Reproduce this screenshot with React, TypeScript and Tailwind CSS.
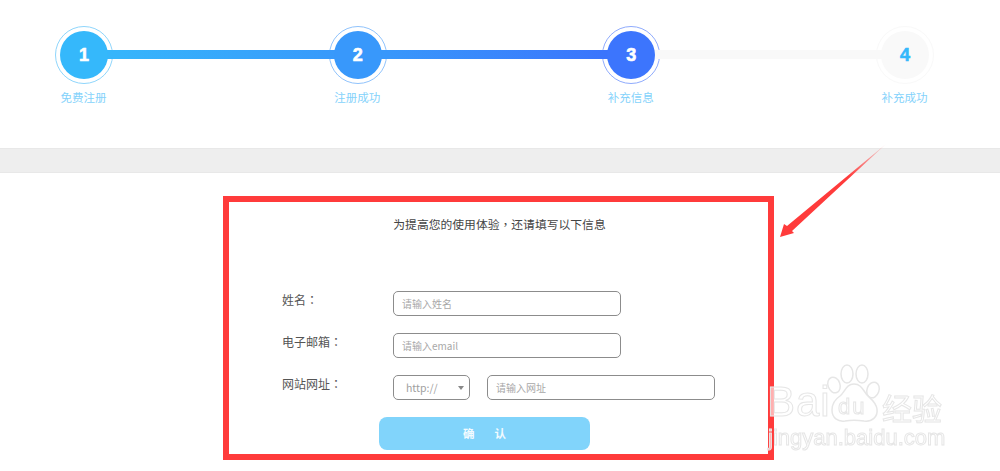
const cjk = "font-['Noto_Sans_CJK_SC','Noto_Sans',sans-serif]";
const punct = "font-['Noto_Sans_CJK_TC',sans-serif]";

function Step({ num, label, ring, fill, digit }: { num: string; label: string; ring: string; fill: string; digit: string }) {
  return (
    <div className="flex flex-col items-center w-[58px] shrink-0">
      <div className={`w-[58px] h-[58px] rounded-full border flex items-center justify-center ${ring}`}>
        <div className={`relative z-10 w-[48px] h-[48px] rounded-full flex items-center justify-center pt-[1px] text-[18px] font-bold font-['Liberation_Sans',sans-serif] [-webkit-text-stroke:0.6px_currentColor] ${fill} ${digit}`}>
          {num}
        </div>
      </div>
      <div className="mt-[5px] -ml-[1px] text-[11.5px] leading-[16px] whitespace-nowrap text-[#84d2fb]">{label}</div>
    </div>
  );
}

function Bar({ color }: { color: string }) {
  return <div className={`relative z-[5] flex-1 h-[9px] mt-[24px] -mx-[6px] ${color}`} />;
}

function Field({ placeholder, width }: { placeholder: string; width: string }) {
  return (
    <input
      placeholder={placeholder}
      className={`${width} h-[25px] px-[8px] border border-[#8c8c8c] rounded-[5px] bg-white text-[10px] outline-none placeholder:text-[#a8a8a8]`}
    />
  );
}

function Row({ label, children }: { label: string; children: React.ReactNode }) {
  return (
    <div className="flex pl-[53px]">
      <div className="w-[111px] pt-[1px] text-[12px] leading-[16px] text-[#555]">
        {label}
        <span className={punct}>：</span>
      </div>
      {children}
    </div>
  );
}

function Watermark() {
  const outline = "[-webkit-text-stroke:1px_#e6e6e6] text-white/60";
  return (
    <div className="absolute left-[767px] top-[362px] w-[185px] h-[90px] pointer-events-none blur-[0.4px]">
      <span className={`absolute left-0 top-[16px] text-[42px] leading-[48px] tracking-[1px] font-['Liberation_Sans',sans-serif] ${outline}`}>Bai</span>
      <svg className="absolute left-[58px] top-0" width="60" height="64" viewBox="825 362 60 64" fill="none" stroke="#e6e6e6" strokeWidth="1.5">
        <ellipse cx="834" cy="385" rx="6" ry="8" fill="#fff" fillOpacity="0.6" transform="rotate(-20 834 385)" />
        <ellipse cx="847" cy="374" rx="6" ry="9" fill="#fff" fillOpacity="0.6" />
        <ellipse cx="862" cy="374" rx="6" ry="9" fill="#fff" fillOpacity="0.6" />
        <ellipse cx="873" cy="390" rx="6" ry="8" fill="#fff" fillOpacity="0.6" transform="rotate(20 873 390)" />
        <path d="M854 384 C846 384 845 392 840 396 C834 400 832 405 832 410 C832 418 838 422 845 421 C850 420 858 420 864 421 C872 422 878 417 877 409 C876 402 871 399 867 395 C863 390 861 384 854 384 Z" fill="#fff" fillOpacity="0.6" />
      </svg>
      <span className={`absolute left-[71px] top-[32px] text-[22px] leading-[26px] tracking-[2px] font-['Liberation_Sans',sans-serif] ${outline}`}>du</span>
      <span className={`absolute left-[115px] top-[28px] text-[30px] leading-[34px] whitespace-nowrap ${cjk} ${outline}`}>经验</span>
      <span className={`absolute left-[1px] top-[63px] text-[22px] leading-[26px] whitespace-nowrap font-['Liberation_Sans',sans-serif] ${outline}`}>jingyan.baidu.com</span>
    </div>
  );
}

export default function App() {
  return (
    <div className={`relative w-[1000px] h-[471px] overflow-hidden bg-white ${cjk}`}>
      {/* Steps */}
      <div className="flex h-[148px] pt-[26px] pl-[55px] pr-[66px]">
        <Step num="1" label="免费注册" ring="border-[#8fd6fc]" fill="bg-[#35b8fb]" digit="text-white" />
        <Bar color="bg-gradient-to-r from-[#36b6fb] to-[#3899fb]" />
        <Step num="2" label="注册成功" ring="border-[#90c3fc]" fill="bg-[#3898fb]" digit="text-white" />
        <Bar color="bg-gradient-to-r from-[#3898fb] to-[#3b74fc]" />
        <Step num="3" label="补充信息" ring="border-[#8fabfd]" fill="bg-[#3c75fd]" digit="text-white" />
        <Bar color="bg-[#f9f9f9]" />
        <Step num="4" label="补充成功" ring="border-[#f9f9f9]" fill="bg-[#f9f9f9]" digit="text-[#35b8fb]" />
      </div>

      {/* Gray band */}
      <div className="h-[25px] bg-[#eeeeee] border-y border-[#e8e8e8]" />

      {/* Form */}
      <div className="mt-[23px] ml-[223px] w-[551px] h-[264px] border-[6px] border-[#ff3b3b]">
        <div className="pt-[13px] pl-[2px] text-center text-[11.8px] leading-[18px] text-[#444]">
          为提高您的使用体验<span className={punct}>，</span>还请填写以下信息
        </div>
        <div className="mt-[58px] flex flex-col gap-[17px]">
          <Row label="姓名">
            <Field placeholder="请输入姓名" width="w-[228px]" />
          </Row>
          <Row label="电子邮箱">
            <Field placeholder="请输入email" width="w-[228px]" />
          </Row>
          <Row label="网站网址">
            <div className="flex gap-[17px]">
              <div className="relative flex items-center w-[77px] h-[25px] pl-[12px] border border-[#8c8c8c] rounded-[5px] bg-white text-[10.5px] text-[#a0a0a0]">
                http://
                <div className="absolute right-[5px] top-[10px] w-0 h-0 border-x-[3px] border-x-transparent border-t-[4px] border-t-[#888]" />
              </div>
              <Field placeholder="请输入网址" width="w-[228px]" />
            </div>
          </Row>
        </div>
        <div className="mt-[17px] ml-[150px] w-[211px] h-[33px] rounded-[8px] bg-[#81d4fb] flex items-center justify-center gap-[20px] text-[11.5px] font-bold text-white/90">
          <span>确</span>
          <span>认</span>
        </div>
      </div>

      {/* Arrow */}
      <svg className="absolute left-[770px] top-[135px]" width="125" height="110" viewBox="770 135 125 110">
        <defs>
          <linearGradient id="tail" x1="886" y1="144" x2="850" y2="178" gradientUnits="userSpaceOnUse">
            <stop offset="0" stopColor="#ff3b3b" stopOpacity="0.1" />
            <stop offset="1" stopColor="#ff3b3b" />
          </linearGradient>
        </defs>
        <polygon points="886,144 792,231 794,233 780,237 784,224 787,226" fill="url(#tail)" />
      </svg>

      <Watermark />
    </div>
  );
}
